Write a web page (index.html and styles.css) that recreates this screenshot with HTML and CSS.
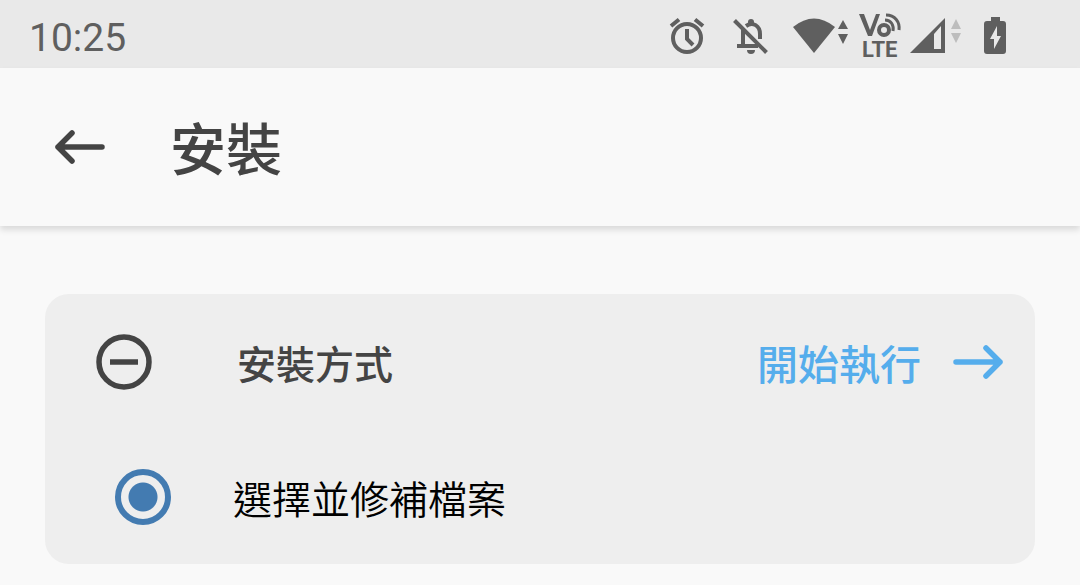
FILE: index.html
```html
<!DOCTYPE html>
<html lang="zh-Hant">
<head>
    <meta charset="UTF-8">
    <meta name="viewport" content="width=device-width, initial-scale=1.0">
    <title>安裝</title>
    <link rel="stylesheet" href="styles.css">
</head>
<body>
    <!-- Status bar -->
    <div class="status-bar">
        <time class="clock">10:25</time>
        <div class="status-icons">
            <svg class="icon-alarm" width="36" height="36" viewBox="0 0 36 36" fill="none" stroke="currentColor">
                <circle cx="18" cy="20" r="14" stroke-width="4"/>
                <path d="M18 11v10l6 6" stroke-width="4"/>
                <path d="M2 8l8-6.500M34 8l-8-6.500" stroke-width="4"/>
            </svg>
            <svg class="icon-bell" width="36" height="38" viewBox="0 0 36 38" fill="none" stroke="currentColor">
                <path d="M10 12v17M4 29h21" stroke-width="4"/>
                <path d="M13 9c7-5 14 0 14 8v5" stroke-width="4"/>
                <path d="M1.500 3.500l32 32" stroke-width="4"/>
                <path d="M15 7V5a3 3 0 0 1 6 0v2zM14 33h8a4 4 0 0 1-8 0z" fill="currentColor" stroke="none"/>
            </svg>
            <svg class="icon-wifi" width="56" height="38" viewBox="0 0 56 38" fill="currentColor">
                <path d="M0 10Q21-7 42 10L21 36z"/>
                <path d="M45 12l5-9 5 9zM45 17h10l-5 10z"/>
            </svg>
            <svg class="icon-volte" width="42" height="48" viewBox="0 0 42 48" fill="none" stroke="currentColor">
                <path d="M0 2h5l6 16 6-16h4l-8 22H9z" fill="currentColor" stroke="none"/>
                <circle cx="25" cy="18" r="5" stroke-width="4"/>
                <path d="M26 8c6 0 9 5 8 11M27 3c9 0 14 7 13 15" stroke-width="3"/>
                <text class="lte" x="3" y="45">LTE</text>
            </svg>
            <svg class="icon-signal" width="52" height="38" viewBox="0 0 52 38" fill="currentColor">
                <path fill-rule="evenodd" d="M0 36L35 1v35zM24 17v15h7V9z"/>
                <path class="idle" d="M41 12l5-10 5 10zM41 16h10l-5 10z"/>
            </svg>
            <svg class="icon-battery" width="22" height="38" viewBox="0 0 22 38" fill="currentColor">
                <path fill-rule="evenodd" d="M7 0h9v4h3q3 0 3 3v27q0 3-3 3H3q-3 0-3-3V7q0-3 3-3h4zM13 9L6 22h4v10l7-13h-4z"/>
            </svg>
        </div>
    </div>

    <!-- App bar -->
    <header class="app-bar">
        <button class="back-button" type="button" aria-label="返回">
            <svg width="50" height="34" viewBox="0 0 50 34" fill="none" stroke="currentColor" stroke-width="5.5" stroke-linecap="round" stroke-linejoin="round">
                <path d="M17 3L3 17l14 14M3 17h44"/>
            </svg>
        </button>
        <h1>安裝</h1>
    </header>

    <main>
        <section class="card">
            <div class="card-header">
                <svg class="method-icon" width="56" height="56" viewBox="0 0 56 56" fill="none" stroke="currentColor">
                    <circle cx="28" cy="28" r="25" stroke-width="5.5"/>
                    <path d="M14 28h28" stroke-width="5.5"/>
                </svg>
                <h2>安裝方式</h2>
                <button class="start-button" type="button">
                    開始執行
                    <svg width="50" height="34" viewBox="0 0 50 34" fill="none" stroke="currentColor" stroke-width="5.5" stroke-linecap="round" stroke-linejoin="round">
                        <path d="M33 3l14 14-14 14M47 17H3"/>
                    </svg>
                </button>
            </div>
            <div class="option">
                <input type="radio" id="patchFile" name="method" checked>
                <label for="patchFile">選擇並修補檔案</label>
            </div>
        </section>
    </main>
</body>
</html>
```
FILE: styles.css
```css
body {
    margin: 0;
    background-color: #f9f9f9;
    color: #444444;
    font-family: Roboto, "Noto Sans CJK TC", sans-serif;
}

button {
    border: none;
    padding: 0;
    background: none;
    color: inherit;
    font: inherit;
    cursor: pointer;
}

svg {
    display: block;
    flex-shrink: 0;
    overflow: visible;
}

h1,
h2 {
    margin: 0;
    font-weight: 500;
}

.status-bar {
    display: flex;
    justify-content: space-between;
    align-items: center;
    height: 68px;
    padding: 0 74px 0 29px;
    background-color: #e9e9e9;
    color: #5f5f5f;
}

.clock {
    padding-top: 8px;
    font-size: 39px;
}

.status-icons {
    display: flex;
    align-items: center;
    padding-top: 4px;
}

.icon-bell {
    margin-left: 28px;
}

.icon-wifi {
    margin-left: 24px;
}

.icon-volte {
    margin-left: 10px;
}

.icon-signal {
    margin-left: 9px;
}

.icon-battery {
    margin-left: 22px;
}

.lte {
    fill: currentColor;
    stroke: none;
    font-size: 22px;
    font-weight: 700;
}

.idle {
    fill: #bdbdbd;
}

.app-bar {
    display: flex;
    align-items: center;
    gap: 65px;
    height: 158px;
    padding: 0 55px;
    box-shadow: 0 4px 6px rgba(0, 0, 0, 0.12);
}

.app-bar h1 {
    padding-bottom: 4px;
    font-size: 56px;
}

main {
    padding: 68px 45px 20px;
}

.card {
    border-radius: 24px;
    background-color: #eeeeee;
}

.card-header,
.option {
    display: flex;
    align-items: center;
    min-height: 135px;
}

.card-header {
    gap: 85px;
    padding: 0 32px 0 51px;
}

.card-header h2 {
    flex: 1;
    font-size: 39px;
}

.start-button {
    display: flex;
    align-items: center;
    gap: 32px;
    color: #55adec;
    font-size: 41px;
    font-weight: 500;
}

.option {
    gap: 62px;
    padding: 0 32px 0 70px;
    color: #000000;
    font-size: 39px;
    font-weight: 350;
}

.option input {
    appearance: none;
    flex-shrink: 0;
    width: 56px;
    height: 56px;
    margin: 0;
    border: 6px solid #437bb1;
    border-radius: 50%;
}

.option input:checked {
    background: radial-gradient(circle, #437bb1 14px, transparent 15px);
}
```
